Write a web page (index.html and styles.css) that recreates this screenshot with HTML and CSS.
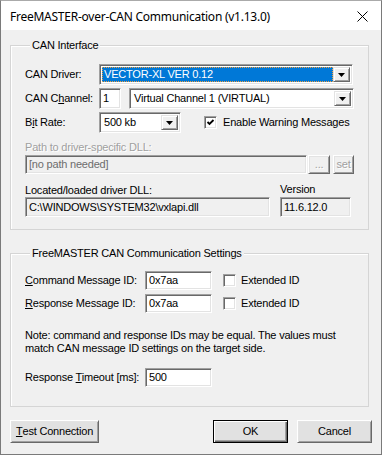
FILE: index.html
```html
<!DOCTYPE html>
<html lang="en">
  <head>
    <meta charset="UTF-8" />
    <title>FreeMASTER-over-CAN Communication</title>
    <link rel="stylesheet" href="styles.css">
  </head>

  <body>
    <div class="window">
      <div class="titlebar">
        <span class="title">FreeMASTER-over-CAN Communication (v1.13.0)</span>
        <svg class="close" width="11" height="11" viewBox="0 0 11 11">
          <path d="M0.5 0.5 L10.5 10.5 M10.5 0.5 L0.5 10.5" stroke="#000" stroke-width="1" fill="none" />
        </svg>
      </div>

      <div class="content">
        <!-- CAN interface -->
        <div class="group group-can">
          <div class="group-title">CAN Interface</div>

          <div class="row row-driver">
            <span class="lbl">CAN Driver:</span>
            <div class="combo combo-driver">
              <span class="combo-text"><span class="sel">VECTOR-XL VER 0.12</span></span>
              <span class="drop"><svg width="7" height="4" viewBox="0 0 7 4"><path d="M0 0 H7 L3.5 4 Z" fill="#000" /></svg></span>
            </div>
          </div>

          <div class="row row-channel">
            <span class="lbl">CAN C<u>h</u>annel:</span>
            <div class="edit edit-channel">1</div>
            <div class="combo combo-channel">
              <span class="combo-text">Virtual Channel 1 (VIRTUAL)</span>
              <span class="drop"><svg width="7" height="4" viewBox="0 0 7 4"><path d="M0 0 H7 L3.5 4 Z" fill="#000" /></svg></span>
            </div>
          </div>

          <div class="row row-bitrate">
            <span class="lbl">B<u>i</u>t Rate:</span>
            <div class="combo combo-bitrate">
              <span class="combo-text">500 kb</span>
              <span class="drop"><svg width="7" height="4" viewBox="0 0 7 4"><path d="M0 0 H7 L3.5 4 Z" fill="#000" /></svg></span>
            </div>
            <label class="check check-warn">
              <span class="box"><svg width="9" height="9" viewBox="0 0 9 9"><path d="M1.5 4 L3.5 6 L7.5 2" stroke="#000" stroke-width="1.8" fill="none" /></svg></span>
              Enable Warning Messages
            </label>
          </div>

          <div class="path-label">Path to driver-specific DLL:</div>
          <div class="row row-path">
            <div class="edit edit-path">[no path needed]</div>
            <span class="btn btn-small btn-dots">...</span>
            <span class="btn btn-small btn-set">set</span>
          </div>

          <div class="row row-dll">
            <div class="col col-dll">
              <div class="col-label">Located/loaded driver DLL:</div>
              <div class="edit edit-ro edit-dll">C:\WINDOWS\SYSTEM32\vxlapi.dll</div>
            </div>
            <div class="col col-version">
              <div class="col-label">Version</div>
              <div class="edit edit-ro edit-version">11.6.12.0</div>
            </div>
          </div>
        </div>

        <!-- communication settings -->
        <div class="group group-comm">
          <div class="group-title">FreeMASTER CAN Communication Settings</div>

          <div class="row row-id row-cmd">
            <span class="lbl lbl-wide"><u>C</u>ommand Message ID:</span>
            <div class="edit edit-id">0x7aa</div>
            <label class="check check-ext">
              <span class="box"></span>
              Extended ID
            </label>
          </div>

          <div class="row row-id row-resp">
            <span class="lbl lbl-wide"><u>R</u>esponse Message ID:</span>
            <div class="edit edit-id">0x7aa</div>
            <label class="check check-ext">
              <span class="box"></span>
              Extended ID
            </label>
          </div>

          <p class="note">
            Note: command and response IDs may be equal. The values must<br>
            match CAN message ID settings on the target side.
          </p>

          <div class="row row-id row-timeout">
            <span class="lbl lbl-wide">Response <u>T</u>imeout [ms]:</span>
            <div class="edit edit-id">500</div>
          </div>
        </div>

        <div class="buttons">
          <span class="btn btn-test"><u>T</u>est Connection</span>
          <span class="btn btn-ok">OK</span>
          <span class="btn btn-cancel">Cancel</span>
        </div>
      </div>
    </div>
  </body>
</html>
```

FILE: styles.css
```css
html,
body {
  margin: 0;
  padding: 0;
  background: #f0f0f0;
}

.window {
  width: 382px;
  height: 455px;
  box-sizing: border-box;
  border: 1px solid #7a7a7a;
  border-top-color: #aaaaaa;
  background: #f0f0f0;
  font-family: "Liberation Sans", Arial, sans-serif;
  font-size: 11px;
  line-height: 13px;
  letter-spacing: -0.2px;
  white-space: nowrap;
  color: #000;
}

/* title bar */
.titlebar {
  height: 29px;
  background: #fff;
  display: flex;
  align-items: center;
  padding: 0 9px;
}

.title {
  flex: 1;
  font-family: "Noto Sans", "Liberation Sans", sans-serif;
  font-size: 12px;
  letter-spacing: -0.25px;
  margin-top: 1px;
}

.close {
  margin-right: 4px;
  margin-top: 1px;
}

/* content */
.content {
  padding: 0 12px 0 9px;
}

.group {
  border: 1px solid #d5d5d5;
  box-shadow: inset 1px 1px 0 #fff;
  padding: 0 14px;
}

.group-can {
  margin-top: 15px;
  padding-bottom: 12px;
}

.group-comm {
  margin-top: 23px;
  padding-bottom: 19px;
}

.group-title {
  width: fit-content;
  margin: -7px 0 0 5px;
  padding: 0 2px;
  background: #f0f0f0;
}

.row {
  display: flex;
  align-items: center;
}

.lbl {
  width: 74px;
  flex: none;
}

.lbl-wide {
  width: 120px;
}

/* sunken boxes */
.edit,
.combo,
.check .box {
  box-sizing: border-box;
  border: 1px solid;
  border-color: #a0a0a0 #fff #fff #a0a0a0;
  box-shadow: inset 1px 1px 0 #696969, inset -1px -1px 0 #e3e3e3;
  background: #fff;
}

.edit {
  height: 20px;
  padding: 0 3px;
  display: flex;
  align-items: center;
  overflow: hidden;
}

.combo {
  height: 21px;
  display: flex;
  padding: 2px;
}

.combo-text {
  flex: 1;
  display: flex;
  align-items: center;
  padding-left: 2px;
}

.combo-driver .combo-text {
  padding: 0;
}

.sel {
  flex: 1;
  align-self: stretch;
  display: flex;
  align-items: center;
  background: #0078d7;
  color: #fff;
  padding-left: 1px;
  border: 1px dotted #f0a040;
}

.drop {
  width: 17px;
  flex: none;
  box-sizing: border-box;
  background: #f0f0f0;
  border: 1px solid;
  border-color: #e3e3e3 #696969 #696969 #e3e3e3;
  box-shadow: inset 1px 1px 0 #fff, inset -1px -1px 0 #a0a0a0;
  display: flex;
  align-items: center;
  justify-content: center;
}

/* CAN interface rows */
.row-driver {
  margin-top: 12px;
}

.combo-driver {
  width: 254px;
}

.row-channel {
  margin-top: 3px;
}

.edit-channel {
  width: 22px;
  height: 21px;
}

.combo-channel {
  width: 225px;
  margin-left: 8px;
}

.row-bitrate {
  margin-top: 3px;
}

.combo-bitrate {
  width: 82px;
}

.check {
  display: flex;
  align-items: center;
}

.check .box {
  width: 13px;
  height: 13px;
  flex: none;
  display: flex;
  align-items: center;
  justify-content: center;
  margin-right: 6px;
}

.check-warn {
  margin-left: 23px;
}

.path-label {
  margin-top: 8px;
  color: #a0a0a0;
  text-shadow: 1px 1px 0 #fff;
}

.row-path {
  margin-top: 1px;
}

.edit-path {
  width: 283px;
  height: 19px;
  background: #f0f0f0;
  color: #6d6d6d;
}

/* raised buttons */
.btn {
  box-sizing: border-box;
  display: flex;
  align-items: center;
  justify-content: center;
  background: #e1e1e1;
  border: 1px solid;
  border-color: #fff #696969 #696969 #fff;
  box-shadow: inset 1px 1px 0 #e3e3e3, inset -1px -1px 0 #a0a0a0;
}

.btn-small {
  height: 19px;
  color: #a0a0a0;
  text-shadow: 1px 1px 0 #fff;
  background: #f0f0f0;
}

.btn-dots {
  width: 22px;
  margin-left: 1px;
}

.btn-set {
  width: 21px;
  margin-left: 3px;
}

.row-dll {
  margin-top: 10px;
  align-items: flex-start;
}

.edit-ro {
  background: #f0f0f0;
}

.edit-dll {
  width: 245px;
}

.col-version {
  margin-left: 10px;
}

.col-version .col-label {
  margin-top: -1px;
  margin-bottom: 1px;
}

.edit-version {
  width: 71px;
}

/* communication settings */
.row-cmd {
  margin-top: 11px;
}

.row-resp {
  margin-top: 4px;
}

.edit-id {
  width: 67px;
  height: 19px;
}

.check-ext {
  margin-left: 11px;
}

.check-ext .box {
  margin-right: 5px;
}

.note {
  margin: 16px 0 0;
}

.row-timeout {
  margin-top: 13px;
}

/* bottom buttons */
.buttons {
  display: flex;
  margin-top: 13px;
  margin-right: -3px;
}

.buttons .btn {
  height: 23px;
}

.btn-test {
  width: 89px;
}

.btn-ok {
  width: 75px;
  margin-left: auto;
  border: 1px solid #000;
  box-shadow: inset 1px 1px 0 #fff, inset -1px -1px 0 #696969, inset -2px -2px 0 #a0a0a0;
}

.btn-cancel {
  width: 75px;
  margin-left: 9px;
}
```
